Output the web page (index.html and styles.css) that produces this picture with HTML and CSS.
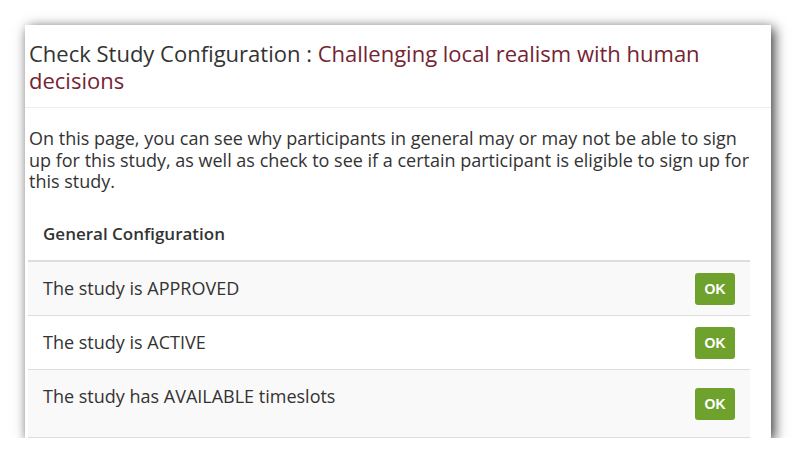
FILE: index.html
```html
<!DOCTYPE html>
<html>
<head>
<meta charset="utf-8">
<link rel="stylesheet" href="styles.css">
</head>
<body>
<div class="card">
  <div class="card-header">
    <h1 class="title">Check Study Configuration : <span class="study-name">Challenging local realism with human decisions</span></h1>
  </div>
  <div class="card-body">
    <p class="intro">On this page, you can see why participants in general may or may not be able to sign up for this study, as well as check to see if a certain participant is eligible to sign up for this study.</p>
    <table class="config">
      <thead>
        <tr><th colspan="2">General Configuration</th></tr>
      </thead>
      <tbody>
        <tr><td class="label">The study is APPROVED</td><td class="status"><span class="badge">OK</span></td></tr>
        <tr><td class="label">The study is ACTIVE</td><td class="status"><span class="badge">OK</span></td></tr>
        <tr class="tall"><td class="label">The study has AVAILABLE timeslots</td><td class="status"><span class="badge">OK</span></td></tr>
      </tbody>
    </table>
  </div>
</div>
</body>
</html>
```
FILE: styles.css
```css
html, body {
  margin: 0;
  padding: 0;
  background: #fff;
}
body {
  font-family: "Open Sans", "Liberation Sans", sans-serif;
  color: #333;
}
.card {
  margin: 25px 0 0 25px;
  width: 746px;
  height: 413px;
  background: #fff;
  box-shadow: 3px 3px 12px rgba(0, 0, 0, 0.8);
  overflow: hidden;
}
.card-header {
  padding: 15px 21px 13px 4px;
  border-bottom: 1px solid #eee;
}
.title {
  margin: 0;
  font-size: 22px;
  line-height: 27px;
  font-weight: 400;
  color: #333;
}
.study-name {
  color: #742432;
}
.card-body {
  padding: 20px 21px 0 3px;
}
.intro {
  margin: 0 0 14px 1px;
  font-size: 18px;
  line-height: 21.5px;
}
.config {
  width: 722px;
  border-collapse: collapse;
  font-size: 18px;
  line-height: 23px;
}
.config th {
  text-align: left;
  font-size: 17px;
  font-weight: 600;
  padding: 15px;
  border-bottom: 2px solid #ddd;
}
.config td {
  border-top: 1px solid #ddd;
  border-bottom: 1px solid #ddd;
}
.config td.label {
  padding: 15px;
  vertical-align: top;
}
.config tr.tall td.label {
  padding-bottom: 29px;
}
.config td.status {
  width: 40px;
  padding: 0 15px 0 0;
  vertical-align: middle;
}
.config tbody tr:nth-child(odd) td {
  background: #f9f9f9;
}
.badge {
  display: flex;
  align-items: center;
  justify-content: center;
  width: 40px;
  height: 32px;
  margin-top: 2px;
  border-radius: 3px;
  background: #6ea22c;
  color: #fff;
  font-family: "Liberation Sans", Arial, sans-serif;
  font-weight: 700;
  font-size: 14px;
}
```
